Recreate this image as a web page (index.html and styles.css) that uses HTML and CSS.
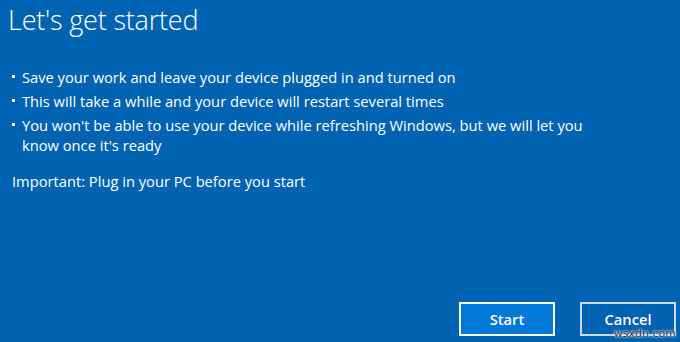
FILE: index.html
```html
<!DOCTYPE html>
<html>
<head>
<meta charset="utf-8">
<link rel="stylesheet" href="styles.css">
</head>
<body>
<div class="page">
  <h1 class="title">Let's get started</h1>
  <ul class="points">
    <li>Save your work and leave your device plugged in and turned on</li>
    <li>This will take a while and your device will restart several times</li>
    <li>You won't be able to use your device while refreshing Windows, but we will let you know once it's ready</li>
  </ul>
  <p class="note">Important: Plug in your PC before you start</p>
  <div class="actions">
    <button class="btn primary">Start</button>
    <button class="btn secondary">Cancel</button>
  </div>
</div>
<span class="watermark">wsxdn.com</span>
</body>
</html>
```
FILE: styles.css
```css
html, body {
  margin: 0;
  padding: 0;
  width: 680px;
  height: 342px;
  overflow: hidden;
  background: #0063b1;
}
body {
  font-family: "Open Sans", "Noto Sans", sans-serif;
  color: #ffffff;
  position: relative;
}
.page {
  height: 342px;
  box-sizing: border-box;
  display: flex;
  flex-direction: column;
  padding: 0 0 6px 8px;
}
.title {
  margin: 0;
  padding-top: 2px;
  font-weight: 300;
  font-size: 27px;
  line-height: 35px;
  letter-spacing: -0.2px;
}
.points {
  list-style: none;
  margin: 30px 0 0 0;
  padding: 0;
  width: 582px;
}
.points li {
  position: relative;
  padding-left: 14px;
  font-size: 14.7px;
  line-height: 20px;
  margin-bottom: 4px;
}
.points li::before {
  content: "";
  position: absolute;
  left: 4px;
  top: 8px;
  width: 3px;
  height: 3px;
  background: #ffffff;
}
.note {
  margin: 12px 0 0 4px;
  font-size: 14.7px;
  line-height: 20px;
}
.actions {
  margin-top: auto;
  display: flex;
  justify-content: flex-end;
  gap: 25px;
  padding-right: 4px;
}
.btn {
  width: 96px;
  height: 34px;
  box-sizing: border-box;
  font-family: "Open Sans", "Noto Sans", sans-serif;
  font-size: 14.7px;
  font-weight: 600;
  color: #ffffff;
  cursor: pointer;
}
.primary {
  background: #0078d7;
  border: 2px solid #ffffff;
}
.secondary {
  background: #0063b1;
  border: 2px solid #d0d8e4;
}
.watermark {
  position: absolute;
  right: 0;
  bottom: 2px;
  font-family: "DejaVu Sans", sans-serif;
  font-size: 11px;
  color: #333;
  text-shadow: 0 0 2px #fff, 0 0 2px #fff;
  padding-right: 4px;
}
```
